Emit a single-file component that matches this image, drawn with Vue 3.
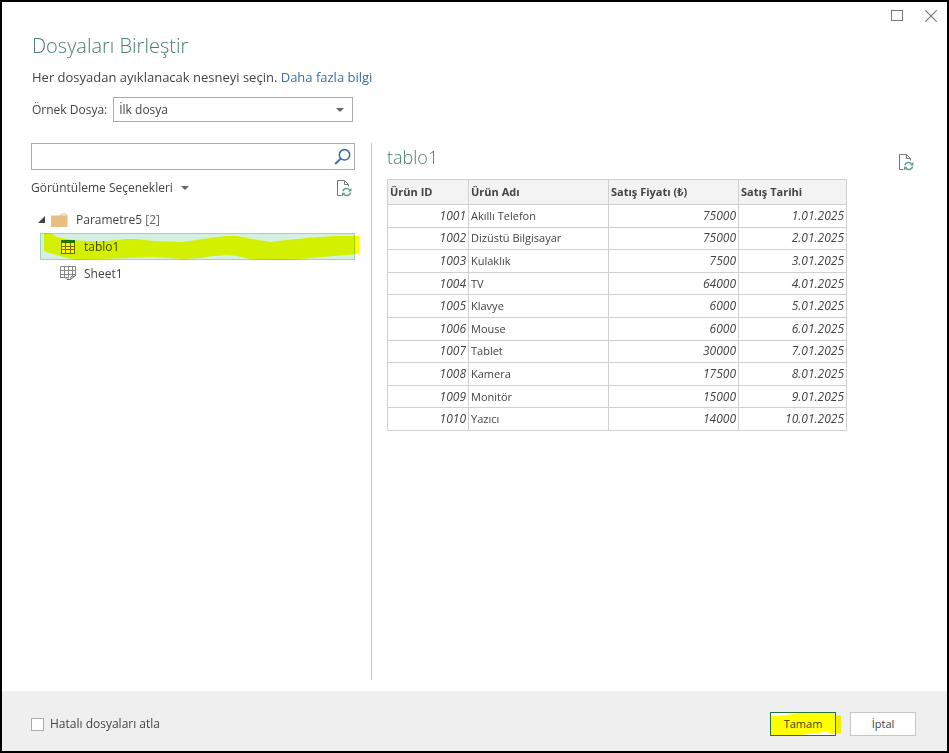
<script setup>
import { ref } from 'vue'

const sampleFile = ref('first')
const search = ref('')
const skipErrors = ref(false)
const expanded = ref(true)
const selected = ref('tablo1')

const items = [
  { name: 'tablo1', type: 'table' },
  { name: 'Sheet1', type: 'sheet' },
]

const columns = ['Ürün ID', 'Ürün Adı', 'Satış Fiyatı (₺)', 'Satış Tarihi']

const rows = [
  [1001, 'Akıllı Telefon', 75000, '1.01.2025'],
  [1002, 'Dizüstü Bilgisayar', 75000, '2.01.2025'],
  [1003, 'Kulaklık', 7500, '3.01.2025'],
  [1004, 'TV', 64000, '4.01.2025'],
  [1005, 'Klavye', 6000, '5.01.2025'],
  [1006, 'Mouse', 6000, '6.01.2025'],
  [1007, 'Tablet', 30000, '7.01.2025'],
  [1008, 'Kamera', 17500, '8.01.2025'],
  [1009, 'Monitör', 15000, '9.01.2025'],
  [1010, 'Yazıcı', 14000, '10.01.2025'],
]
</script>

<template>
  <main class="dialog">
    <div class="titlebar">
      <button type="button" class="window-btn" aria-label="Ekranı kapla">
        <svg width="12" height="12" viewBox="0 0 12 12" aria-hidden="true">
          <rect x="0.5" y="0.5" width="11" height="10" fill="none" stroke="#777" />
        </svg>
      </button>
      <button type="button" class="window-btn" aria-label="Kapat">
        <svg width="12" height="12" viewBox="0 0 12 12" aria-hidden="true">
          <path d="M0.3 0.3 11.7 11.7M11.7 0.3 0.3 11.7" fill="none" stroke="#777" stroke-width="1.1" />
        </svg>
      </button>
    </div>

    <header class="intro">
      <h1>Dosyaları Birleştir</h1>
      <p>Her dosyadan ayıklanacak nesneyi seçin. <a href="#">Daha fazla bilgi</a></p>
      <div class="sample">
        <label for="sample-file">Örnek Dosya:</label>
        <div class="select-box">
          <select id="sample-file" v-model="sampleFile">
            <option value="first">İlk dosya</option>
          </select>
          <span class="caret" aria-hidden="true"></span>
        </div>
      </div>
    </header>

    <div class="content">
      <section class="navigator">
        <div class="search-box">
          <input v-model="search" type="text" aria-label="Ara" />
          <svg width="18" height="18" viewBox="0 0 18 18" aria-hidden="true">
            <circle cx="10.5" cy="6.8" r="5.2" fill="none" stroke="#3a70b0" stroke-width="1.6" />
            <path d="M6.9 10.4 1.2 16" fill="none" stroke="#3a70b0" stroke-width="2" />
          </svg>
        </div>

        <div class="options">
          <button type="button" class="options-btn">
            Görüntüleme Seçenekleri
            <span class="caret" aria-hidden="true"></span>
          </button>
          <button type="button" class="icon-btn" aria-label="Yenile">
            <svg width="17" height="18" viewBox="0 0 17 18" aria-hidden="true">
              <path d="M5.5 16.5H1.5V1.5H8.5L12.5 5.5V7.5M8.5 1.5V5.5H12.5" fill="none" stroke="#777" />
              <path d="M6.8 12.3A4 4 0 0 1 13.6 10.8M14.6 13.5A4 4 0 0 1 7.8 15.3" fill="none" stroke="#5fa184" stroke-width="1.5" />
              <path d="M15.4 8.8V12.4H11.8ZM6 17.4V13.8H9.6Z" fill="#5fa184" />
            </svg>
          </button>
        </div>

        <div class="tree">
          <button type="button" class="tree-root" :aria-expanded="expanded" @click="expanded = !expanded">
            <svg class="twisty" width="7" height="7" viewBox="0 0 7 7" aria-hidden="true">
              <path d="M7 0V7H0Z" fill="#444" />
            </svg>
            <svg width="17" height="14" viewBox="0 0 17 14" aria-hidden="true">
              <path d="M0 2.5H9L10.5 0.5H15L16.5 2.5V14H0Z" fill="#e8bf82" />
              <path d="M10 2.6 11 1.3H14.8L15.6 2.6Z" fill="#fbf0df" />
            </svg>
            <span>Parametre5 <span class="count">[2]</span></span>
          </button>
          <template v-if="expanded">
            <button
              v-for="item in items"
              :key="item.name"
              type="button"
              class="tree-item"
              :class="{ selected: selected === item.name }"
              @click="selected = item.name"
            >
              <svg v-if="item.type === 'table'" width="16" height="14" viewBox="0 0 16 14" aria-hidden="true">
                <rect x="1" y="1" width="14" height="12" fill="#fff4c8" />
                <path d="M1.5 3V13M5.5 3V13M10.5 3V13M14.5 3V13M1 6.5H15M1 9.5H15M1 13.5H15" fill="none" stroke="#6e6a52" />
                <rect x="1" y="0" width="14" height="3" fill="#217346" />
              </svg>
              <svg v-else width="16" height="15" viewBox="0 0 16 15" aria-hidden="true">
                <path d="M0.5 12V0.5H15.5V10M4.5 0.5V11.5M8.5 0.5V11.5M12.5 0.5V10M0.5 4.5H15.5M0.5 8.5H15.5" fill="none" stroke="#888" />
                <path d="M0.5 11.5H5L7 13.5H10.5L15.5 9.5M5.5 11.5 9 12M10.5 13.5 11 10.5 15 10" fill="none" stroke="#777" />
              </svg>
              <span>{{ item.name }}</span>
              <svg v-if="item.name === 'tablo1'" class="marker" width="320" height="28" viewBox="0 0 320 28" aria-hidden="true">
                <path
                  d="M4 0 10 0 17 4 33 7 47 8H67L87 6H97L113 8 143 9 163 6 185 3H197L213 6 230 9 247 7 267 5 293 3H319V21L293 23 273 25 247 27H230L210 26 197 23 187 22 173 23 160 25 143 26 113 24 90 25 60 26 37 27 23 24 13 21 4 18Z"
                  fill="#ff0"
                />
              </svg>
            </button>
          </template>
        </div>
      </section>

      <section class="preview">
        <div class="preview-head">
          <h2>tablo1</h2>
          <button type="button" class="icon-btn" aria-label="Önizlemeyi yenile">
            <svg width="17" height="18" viewBox="0 0 17 18" aria-hidden="true">
              <path d="M5.5 16.5H1.5V1.5H8.5L12.5 5.5V7.5M8.5 1.5V5.5H12.5" fill="none" stroke="#777" />
              <path d="M6.8 12.3A4 4 0 0 1 13.6 10.8M14.6 13.5A4 4 0 0 1 7.8 15.3" fill="none" stroke="#5fa184" stroke-width="1.5" />
              <path d="M15.4 8.8V12.4H11.8ZM6 17.4V13.8H9.6Z" fill="#5fa184" />
            </svg>
          </button>
        </div>
        <table>
          <colgroup>
            <col class="col-id" />
            <col class="col-name" />
            <col class="col-price" />
            <col class="col-date" />
          </colgroup>
          <thead>
            <tr>
              <th v-for="column in columns" :key="column" scope="col">{{ column }}</th>
            </tr>
          </thead>
          <tbody>
            <tr v-for="row in rows" :key="row[0]">
              <td v-for="(cell, index) in row" :key="index" :class="{ value: index !== 1 }">{{ cell }}</td>
            </tr>
          </tbody>
        </table>
      </section>
    </div>

    <footer class="actions">
      <label class="skip">
        <input v-model="skipErrors" type="checkbox" />
        Hatalı dosyaları atla
      </label>
      <button type="button" class="btn primary">
        Tamam
        <svg class="marker" width="72" height="24" viewBox="0 0 72 24" aria-hidden="true">
          <path d="M1 4 16 3 30 1H64V3L71 4V21L64 22 56 20 46 21 30 23H1Z" fill="#ff0" />
        </svg>
      </button>
      <button type="button" class="btn">İptal</button>
    </footer>
  </main>
</template>

<style>
body {
  margin: 0;
}
</style>

<style scoped>
.dialog {
  display: flex;
  flex-direction: column;
  box-sizing: border-box;
  min-height: 100vh;
  border: 2px solid #000;
  background: #fff;
  color: #444;
  font-family: 'Open Sans', 'Noto Sans', sans-serif;
  font-size: 12px;
  line-height: 20px;
}

button,
input,
select {
  margin: 0;
  padding: 0;
  border: 0;
  border-radius: 0;
  background: transparent;
  color: inherit;
  font: inherit;
}

svg {
  flex: none;
  display: block;
}

.titlebar {
  display: flex;
  justify-content: flex-end;
  gap: 22px;
  padding: 8px 10px 0;
}

.window-btn,
.icon-btn {
  display: flex;
}

.intro {
  padding: 10px 30px 0;
}

h1,
h2 {
  margin: 0;
  color: #4a8069;
  font-weight: 300;
}

h1 {
  font-size: 20px;
  line-height: 28px;
}

h2 {
  font-size: 18px;
  line-height: 28px;
}

.intro p {
  margin: 7px 0 10px;
  font-size: 13px;
}

a {
  color: #3b6fa0;
  text-decoration: none;
}

.sample {
  display: flex;
  align-items: center;
  gap: 6px;
}

.select-box {
  display: flex;
  align-items: center;
  box-sizing: border-box;
  width: 240px;
  height: 25px;
  border: 1px solid #ababab;
}

.select-box select {
  flex: 1;
  height: 100%;
  padding-left: 5px;
  appearance: none;
}

.caret {
  flex: none;
  border: 4px solid transparent;
  border-top-color: #666;
  border-bottom: 0;
}

.select-box .caret {
  margin-right: 8px;
}

.content {
  display: flex;
  flex: 1;
  padding: 21px 32px 11px 29px;
}

.navigator {
  box-sizing: border-box;
  width: 341px;
  padding-right: 16px;
  border-right: 1px solid #c6c6c6;
}

.search-box {
  display: flex;
  align-items: center;
  box-sizing: border-box;
  height: 27px;
  padding-right: 2px;
  border: 1px solid #ababab;
}

.search-box input {
  flex: 1;
  height: 100%;
  padding: 0 5px;
}

.options {
  display: flex;
  align-items: center;
  justify-content: space-between;
  margin-top: 8px;
  padding-right: 2px;
}

.options-btn {
  display: flex;
  align-items: center;
  gap: 8px;
}

.tree {
  margin-top: 8px;
  padding-left: 9px;
}

.tree-root,
.tree-item {
  display: flex;
  align-items: center;
  gap: 8px;
  box-sizing: border-box;
  width: 100%;
  height: 27px;
  text-align: left;
}

.tree-root {
  gap: 6px;
}

.tree-root svg + svg {
  margin-right: 2px;
}

.twisty {
  margin-left: -2px;
}

.count {
  color: #666;
}

.tree-item {
  position: relative;
  padding-left: 19px;
  border: 1px solid transparent;
}

.tree-item.selected {
  border-color: #9fd5b7;
  background: #d3f0e0;
}

.marker {
  position: absolute;
  top: -1px;
  left: -1px;
  mix-blend-mode: multiply;
  pointer-events: none;
}

.preview {
  flex: 1;
  padding-left: 15px;
}

.preview-head {
  display: flex;
  align-items: flex-end;
  justify-content: space-between;
  margin-bottom: 8px;
}

table {
  width: 460px;
  height: 252px;
  border-collapse: collapse;
  table-layout: fixed;
  font-size: 11px;
  line-height: 16px;
}

.col-id {
  width: 81px;
}

.col-name {
  width: 140px;
}

.col-price {
  width: 130px;
}

.col-date {
  width: 108px;
}

th,
td {
  padding: 0 2px;
  border: 1px solid #d0d0d0;
  text-align: left;
  white-space: nowrap;
}

th {
  height: 24px;
  background: #f3f3f3;
  font-weight: 700;
}

.value {
  font-size: 12px;
  font-style: italic;
  text-align: right;
}

.actions {
  display: flex;
  align-items: center;
  gap: 14px;
  padding: 21px 31px 15px 29px;
  background: #efefef;
}

.skip {
  display: flex;
  align-items: center;
  gap: 6px;
  margin-right: auto;
}

.skip input {
  box-sizing: border-box;
  width: 13px;
  height: 13px;
  border: 1px solid #ababab;
  background: #fff;
  appearance: none;
}

.skip input:checked {
  background: #217346;
}

.btn {
  position: relative;
  box-sizing: border-box;
  width: 66px;
  height: 24px;
  border: 1px solid #c6c6c6;
  background: #fff;
  font-size: 11px;
}

.btn.primary {
  border-color: #217346;
}
</style>
